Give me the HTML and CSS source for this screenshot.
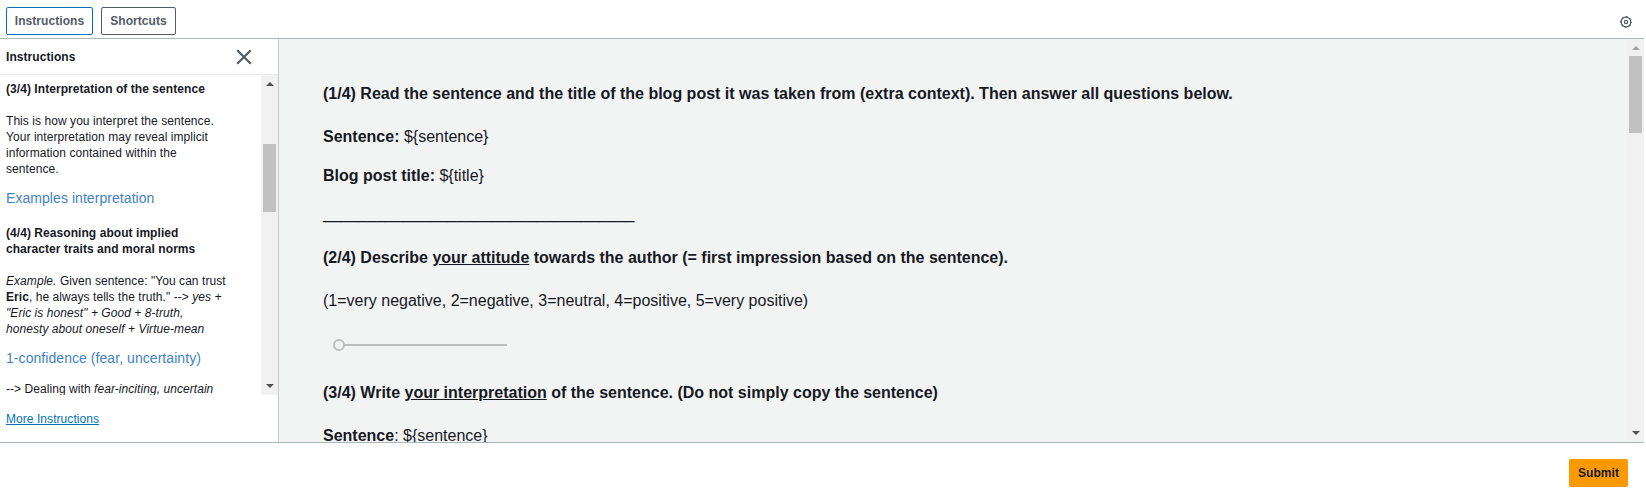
FILE: index.html
```html
<!DOCTYPE html>
<html lang="en">
<head>
    <meta charset="UTF-8">
    <meta name="viewport" content="width=device-width, initial-scale=1.0">
    <title>Instructions</title>
    <link rel="stylesheet" href="styles.css">
</head>
<body>
    <header class="topbar">
        <button class="btn btn-active">Instructions</button>
        <button class="btn btn-shortcuts">Shortcuts</button>
        <svg class="gear" width="12" height="12" viewBox="0 0 12 12" fill="none" stroke="#545b64">
            <circle cx="6" cy="6" r="4.8" stroke-width="1.2"/>
            <circle cx="6" cy="6" r="5.5" stroke-width="1" stroke-dasharray="2.3 2.02" stroke-dashoffset="1.15"/>
            <circle cx="6" cy="6" r="1.6" stroke-width="1.2"/>
        </svg>
    </header>
    <div class="workspace">
        <aside class="sidebar">
            <div class="sidebar-header">
                <h2>Instructions</h2>
                <svg class="close" width="16" height="16" viewBox="0 0 16 16" stroke="#545b64" stroke-width="2.2">
                    <path d="M1.2 1.2 14.8 14.8M14.8 1.2 1.2 14.8"/>
                </svg>
            </div>
            <div class="sidebar-scroll">
                <div class="sidebar-text">
                    <h3>(3/4) Interpretation of the sentence</h3>
                    <p>This is how you interpret the sentence.<br>Your interpretation may reveal implicit<br>information contained within the<br>sentence.</p>
                    <a class="example-link">Examples interpretation</a>
                    <h3>(4/4) Reasoning about implied<br>character traits and moral norms</h3>
                    <p><i>Example.</i> Given sentence: "You can trust<br><b>Eric</b>, he always tells the truth." --&gt; <i>yes +<br>"Eric is honest" + Good + 8-truth,<br>honesty about oneself + Virtue-mean</i></p>
                    <a class="example-link confidence">1-confidence (fear, uncertainty)</a>
                    <p class="dealing">--&gt; Dealing with <i>fear-inciting, uncertain</i></p>
                </div>
                <div class="scrollbar">
                    <span class="arrow up"></span>
                    <span class="thumb"></span>
                    <span class="arrow down"></span>
                </div>
            </div>
            <a class="more">More Instructions</a>
        </aside>
        <main class="task">
            <div class="task-text">
                <h4>(1/4) Read the sentence and the title of the blog post it was taken from (extra context). Then answer all questions below.</h4>
                <p class="sentence"><b>Sentence:</b> ${sentence}</p>
                <p class="title"><b>Blog post title:</b> ${title}</p>
                <p class="divider">___________________________________</p>
                <h4>(2/4) Describe <u>your attitude</u> towards the author (= first impression based on the sentence).</h4>
                <p class="scale">(1=very negative, 2=negative, 3=neutral, 4=positive, 5=very positive)</p>
                <div class="slider">
                    <span class="knob"></span>
                    <span class="track"></span>
                </div>
                <h4>(3/4) Write <u>your interpretation</u> of the sentence. (Do not simply copy the sentence)</h4>
                <p class="sentence"><b>Sentence</b>: ${sentence}</p>
            </div>
            <div class="scrollbar">
                <span class="arrow up disabled"></span>
                <span class="thumb"></span>
                <span class="arrow down"></span>
            </div>
        </main>
    </div>
    <footer class="footer">
        <button class="submit">Submit</button>
    </footer>
</body>
</html>
```
FILE: styles.css
```css
* {
    box-sizing: border-box;
}
body {
    font-family: "Liberation Sans", Arial, sans-serif;
    font-size: 12px;
    line-height: 16px;
    letter-spacing: 0.06px;
    color: #16191f;
    background: #fff;
    margin: 0 2px 0 0;
    height: 491px;
    display: flex;
    flex-direction: column;
    overflow: hidden;
}
h2, h3, h4, p {
    margin: 0;
}
button {
    font-family: inherit;
    font-size: 12px;
    font-weight: bold;
    line-height: 16px;
    letter-spacing: 0.06px;
    padding: 0;
    height: 28px;
    border-radius: 2px;
}
.topbar {
    height: 39px;
    border-bottom: 1px solid #aab7b8;
    padding: 7px 12px 0 6px;
    display: flex;
    gap: 8px;
}
.btn {
    width: 75px;
    color: #545b64;
    background: #fff;
    border: 1px solid #545b64;
}
.btn-active {
    width: 87px;
    border-color: #0073bb;
}
.gear {
    margin: 9px 0 0 auto;
    overflow: visible;
}
.workspace {
    height: 404px;
    display: flex;
    border-bottom: 1px solid #aab7b8;
}
.sidebar {
    width: 279px;
    border-right: 1px solid #c5cccc;
}
.sidebar-header {
    height: 36px;
    padding: 0 26px 0 6px;
    display: flex;
    align-items: center;
    justify-content: space-between;
    border-bottom: 1px solid #eaeded;
}
.sidebar-header h2 {
    font-size: 12px;
}
.sidebar-scroll {
    height: 320px;
    display: flex;
    overflow: hidden;
}
.sidebar-text {
    flex: 1;
    padding: 6px 0 0 6px;
    white-space: nowrap;
}
.sidebar-text h3 {
    font-size: 12px;
    margin-bottom: 16px;
}
.example-link {
    display: block;
    font-size: 14px;
    line-height: 20px;
    color: #4183c4;
    margin: 11px 0 17px;
}
.confidence {
    margin-bottom: 13px;
}
.scrollbar {
    width: 17px;
    background: #f1f1f1;
    display: flex;
    flex-direction: column;
    align-items: center;
    flex-shrink: 0;
}
.thumb {
    width: 13px;
    height: 68px;
    background: #c1c1c1;
    margin-top: 58px;
}
.arrow {
    border: 4px solid transparent;
    border-top-width: 0;
    border-bottom: 4px solid #505050;
    margin-top: 7px;
}
.arrow.disabled {
    border-bottom-color: #a3a3a3;
}
.arrow.down {
    border-bottom-width: 0;
    border-top: 4px solid #505050;
    margin: auto 0 7px;
}
.more {
    display: inline-block;
    margin: 16px 0 0 6px;
    color: #0073bb;
    text-decoration: underline;
}
.task {
    flex: 1;
    display: flex;
    background: #f2f3f3;
    letter-spacing: 0;
    overflow: hidden;
}
.task-text {
    flex: 1;
    padding: 45px 0 0 44px;
    font-size: 16px;
    line-height: 20px;
    white-space: nowrap;
}
.task-text h4 {
    font-size: 16px;
    margin-bottom: 23px;
}
.title {
    margin-top: 19px;
}
.divider {
    margin: 18px 0 24px;
}
.slider {
    display: flex;
    align-items: center;
    height: 12px;
    margin: 28px 0 32px 10px;
}
.knob {
    width: 12px;
    height: 12px;
    border: 2px solid #bdbdbd;
    border-radius: 50%;
}
.track {
    width: 162px;
    height: 2px;
    background: #bdbdbd;
}
.task .thumb {
    height: 77px;
    margin-top: 6px;
}
.footer {
    padding: 16px 16px 0 0;
    text-align: right;
}
.submit {
    width: 59px;
    color: #16191f;
    background: #ff9900;
    border: 0;
}
```
